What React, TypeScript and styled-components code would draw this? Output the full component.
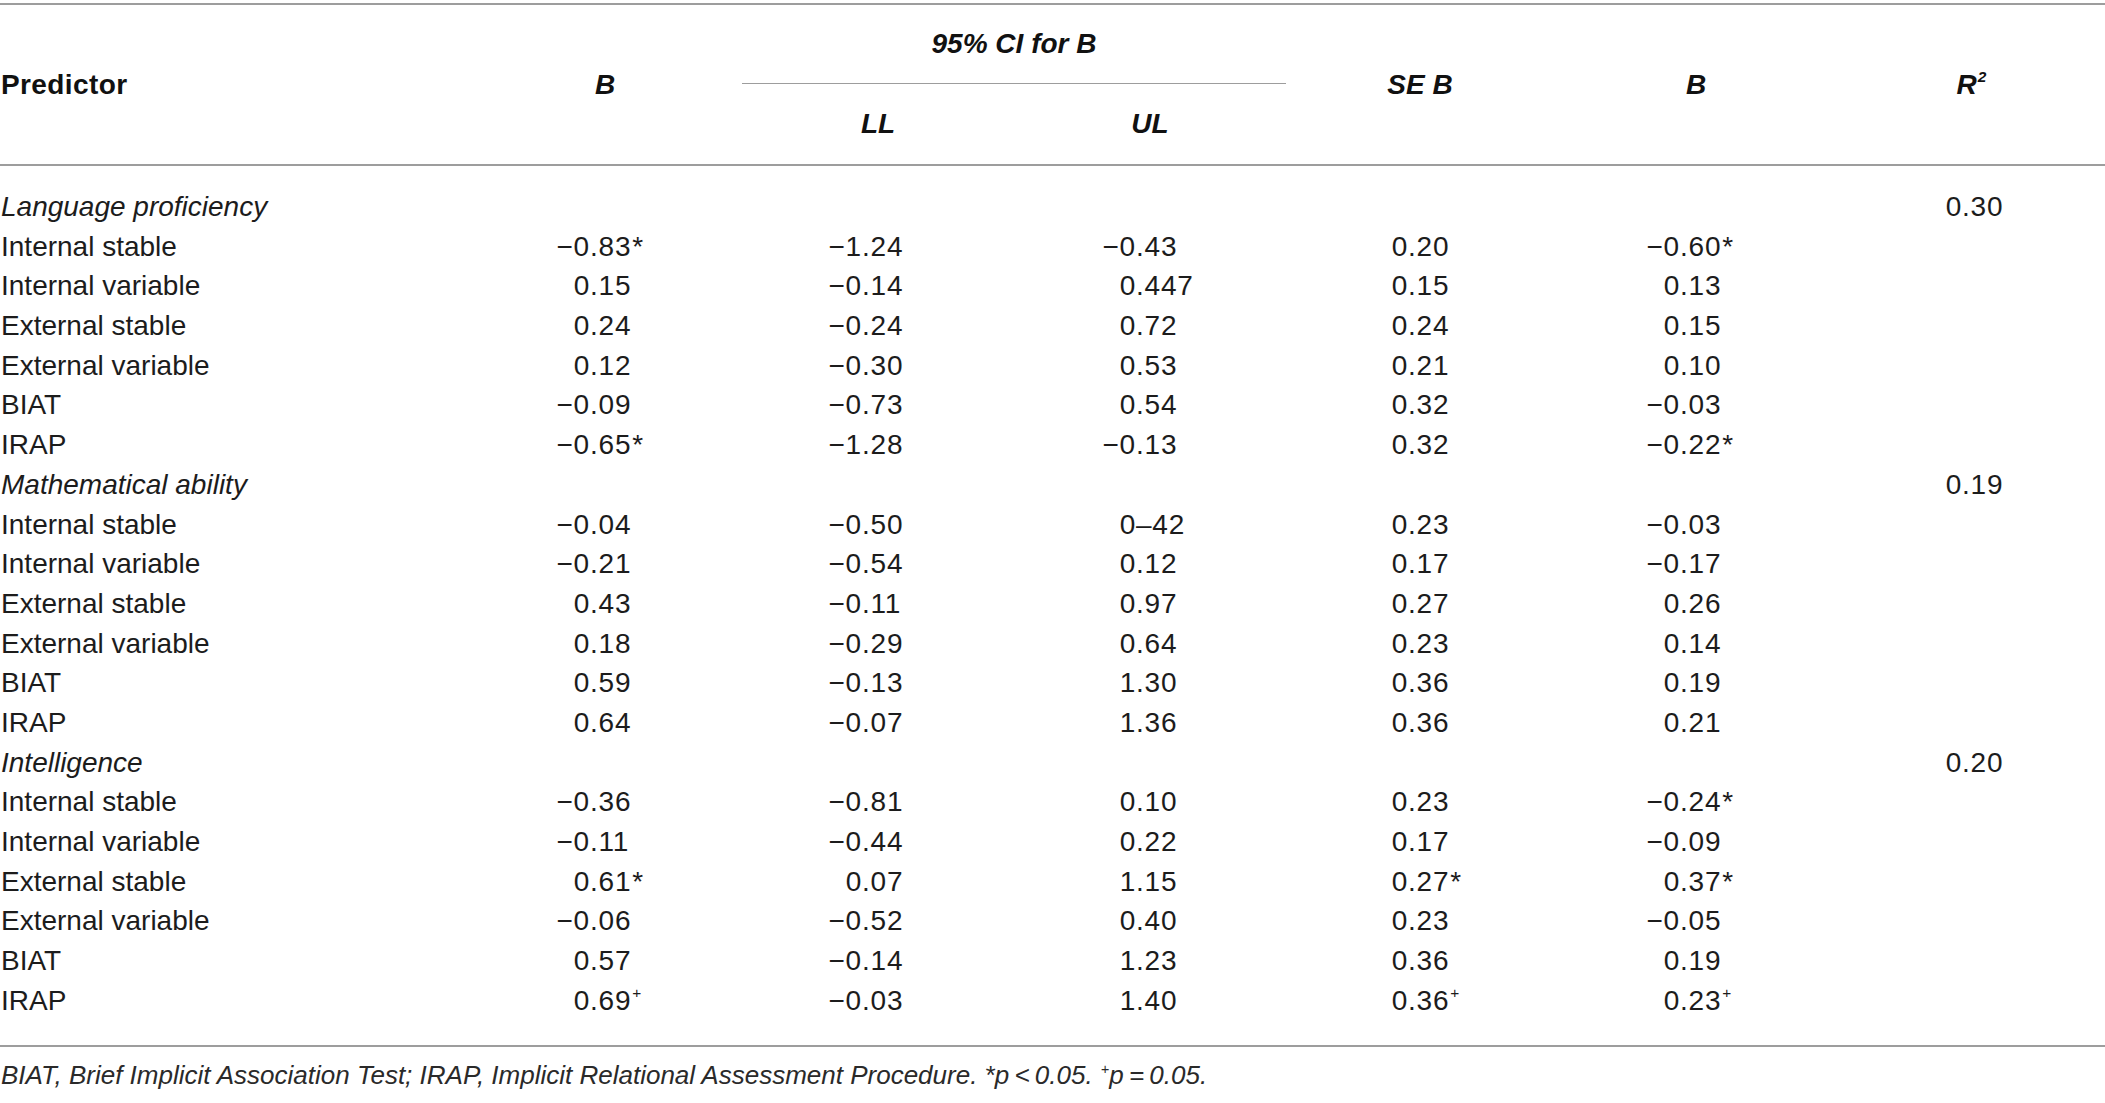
import React from "react";
import styled, { createGlobalStyle } from "styled-components";

const Global = createGlobalStyle`
  html, body { margin: 0; padding: 0; background: #ffffff; }
  body {
    font-family: "Liberation Sans", Arial, Helvetica, sans-serif;
    color: #1c1c1c;
  }
`;

const COLS = "468px 274px 272px 272px 268px 284px 1fr";
const RULE = "#9d9d9d";
/* distance from column start to the decimal point, per value column */
const DEC = [122, 120, 122, 122, 126, 124];

const Page = styled.div`
  width: 2105px;
  padding-top: 3px;
`;

const Table = styled.div`
  border-top: 2px solid ${RULE};
  border-bottom: 2px solid ${RULE};
`;

const Head = styled.div`
  display: grid;
  grid-template-columns: ${COLS};
  grid-template-rows: 79px 80px;
  border-bottom: 2px solid ${RULE};
  font-size: 28px;
  font-weight: 700;
  color: #111;
`;

const HeadCell = styled.div<{
  $col: string;
  $row: string;
  $left?: boolean;
  $italic?: boolean;
  $rule?: boolean;
}>`
  grid-column: ${(p) => p.$col};
  grid-row: ${(p) => p.$row};
  display: flex;
  align-items: center;
  justify-content: ${(p) => (p.$left ? "flex-start" : "center")};
  padding-left: ${(p) => (p.$left ? "1px" : "0")};
  font-style: ${(p) => (p.$italic ? "italic" : "normal")};
  letter-spacing: ${(p) => (p.$left ? "0.4px" : "0")};
  ${(p) => (p.$rule ? `border-bottom: 1.5px solid ${RULE};` : "")}
`;

const Sup = styled.sup`
  font-size: 0.55em;
  line-height: 0;
  vertical-align: 0.75em;
  margin-left: 1px;
`;

const Body = styled.div`
  padding: 21px 0 25px;
`;

const Row = styled.div`
  display: grid;
  grid-template-columns: ${COLS};
  height: 39.7px;
  align-items: center;
  font-size: 28px;
  line-height: 39.7px;
`;

const Label = styled.div<{ $group?: boolean }>`
  padding-left: 1px;
  font-style: ${(p) => (p.$group ? "italic" : "normal")};
  white-space: nowrap;
`;

const Value = styled.div<{ $dec: number }>`
  display: grid;
  grid-template-columns: ${(p) => p.$dec}px auto;
  white-space: nowrap;
  letter-spacing: 0.8px;
`;

const IntPart = styled.span`
  text-align: right;
`;

const FracPart = styled.span`
  text-align: left;
`;

const Mark = styled.span<{ $small?: boolean }>`
  ${(p) =>
    p.$small
      ? `font-size: 0.55em; line-height: 0; vertical-align: 0.75em; margin-left: 1px;`
      : `margin-left: 1px;`}
`;

const Footnote = styled.div`
  padding-top: 13px;
  font-size: 26px;
  line-height: 30px;
  font-style: italic;
  color: #2a2a2a;
  padding-left: 1px;
`;

type RowData = { label: string; group?: boolean; vals: string[]; r2?: string };

const data: RowData[] = [
  { label: "Language proficiency", group: true, vals: [], r2: "0.30" },
  { label: "Internal stable", vals: ["−0.83*", "−1.24", "−0.43", "0.20", "−0.60*"] },
  { label: "Internal variable", vals: ["0.15", "−0.14", "0.447", "0.15", "0.13"] },
  { label: "External stable", vals: ["0.24", "−0.24", "0.72", "0.24", "0.15"] },
  { label: "External variable", vals: ["0.12", "−0.30", "0.53", "0.21", "0.10"] },
  { label: "BIAT", vals: ["−0.09", "−0.73", "0.54", "0.32", "−0.03"] },
  { label: "IRAP", vals: ["−0.65*", "−1.28", "−0.13", "0.32", "−0.22*"] },
  { label: "Mathematical ability", group: true, vals: [], r2: "0.19" },
  { label: "Internal stable", vals: ["−0.04", "−0.50", "0–42", "0.23", "−0.03"] },
  { label: "Internal variable", vals: ["−0.21", "−0.54", "0.12", "0.17", "−0.17"] },
  { label: "External stable", vals: ["0.43", "−0.11", "0.97", "0.27", "0.26"] },
  { label: "External variable", vals: ["0.18", "−0.29", "0.64", "0.23", "0.14"] },
  { label: "BIAT", vals: ["0.59", "−0.13", "1.30", "0.36", "0.19"] },
  { label: "IRAP", vals: ["0.64", "−0.07", "1.36", "0.36", "0.21"] },
  { label: "Intelligence", group: true, vals: [], r2: "0.20" },
  { label: "Internal stable", vals: ["−0.36", "−0.81", "0.10", "0.23", "−0.24*"] },
  { label: "Internal variable", vals: ["−0.11", "−0.44", "0.22", "0.17", "−0.09"] },
  { label: "External stable", vals: ["0.61*", "0.07", "1.15", "0.27*", "0.37*"] },
  { label: "External variable", vals: ["−0.06", "−0.52", "0.40", "0.23", "−0.05"] },
  { label: "BIAT", vals: ["0.57", "−0.14", "1.23", "0.36", "0.19"] },
  { label: "IRAP", vals: ["0.69+", "−0.03", "1.40", "0.36+", "0.23+"] },
];

function Num({ v, dec }: { v: string; dec: number }) {
  let mark = "";
  let core = v;
  if (core.endsWith("*") || core.endsWith("+")) {
    mark = core.slice(-1);
    core = core.slice(0, -1);
  }
  let idx = core.indexOf(".");
  if (idx < 0) idx = core.indexOf("–");
  const ip = idx >= 0 ? core.slice(0, idx) : core;
  const fp = idx >= 0 ? core.slice(idx) : "";
  return (
    <Value $dec={dec}>
      <IntPart>{ip}</IntPart>
      <FracPart>
        {fp}
        {mark && <Mark $small={mark === "+"}>{mark}</Mark>}
      </FracPart>
    </Value>
  );
}

export default function App() {
  return (
    <Page>
      <Global />
      <Table>
        <Head>
          <HeadCell $col="1" $row="1 / 3" $left>
            Predictor
          </HeadCell>
          <HeadCell $col="2" $row="1 / 3" $italic>
            B
          </HeadCell>
          <HeadCell $col="3 / 5" $row="1" $italic $rule>
            95% CI for B
          </HeadCell>
          <HeadCell $col="3" $row="2" $italic>
            LL
          </HeadCell>
          <HeadCell $col="4" $row="2" $italic>
            UL
          </HeadCell>
          <HeadCell $col="5" $row="1 / 3" $italic>
            SE B
          </HeadCell>
          <HeadCell $col="6" $row="1 / 3" $italic>
            B
          </HeadCell>
          <HeadCell $col="7" $row="1 / 3" $italic>
            <span>
              R<Sup>2</Sup>
            </span>
          </HeadCell>
        </Head>
        <Body>
          {data.map((r, i) => (
            <Row key={i}>
              <Label $group={r.group}>{r.label}</Label>
              {r.group ? (
                <>
                  <div />
                  <div />
                  <div />
                  <div />
                  <div />
                  <Num v={r.r2 || ""} dec={DEC[5]} />
                </>
              ) : (
                <>
                  {r.vals.map((v, j) => (
                    <Num key={j} v={v} dec={DEC[j]} />
                  ))}
                  <div />
                </>
              )}
            </Row>
          ))}
        </Body>
      </Table>
      <Footnote>
        BIAT, Brief Implicit Association Test; IRAP, Implicit Relational Assessment Procedure. *p{"\u2009"}&lt;{"\u2009"}0.05.{" "}
        <Mark $small>+</Mark>p{"\u2009"}={"\u2009"}0.05.
      </Footnote>
    </Page>
  );
}
